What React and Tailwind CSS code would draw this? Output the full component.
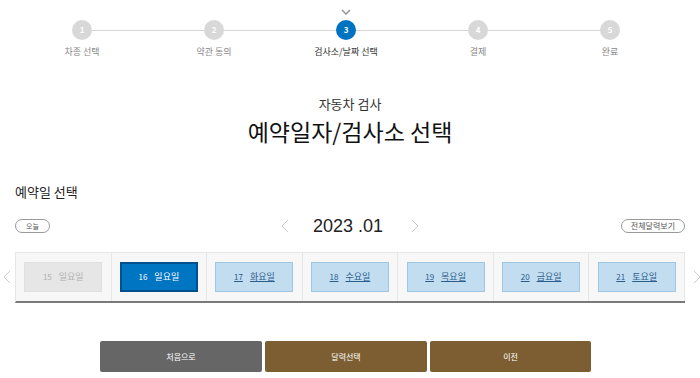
const steps = ['차종 선택', '약관 동의', '검사소/날짜 선택', '결제', '완료'];
const days = [
  { d: '15', w: '일요일', state: 'off' },
  { d: '16', w: '일요일', state: 'on' },
  { d: '17', w: '화요일' },
  { d: '18', w: '수요일' },
  { d: '19', w: '목요일' },
  { d: '20', w: '금요일' },
  { d: '21', w: '토요일' },
];

function Chevron({ dir, className }) {
  return (
    <svg width="8" height="14" viewBox="0 0 8 14" className={className}>
      <path d={dir === 'left' ? 'M7 1 1 7l6 6' : 'M1 1l6 6-6 6'} fill="none" stroke="currentColor" strokeWidth="1" />
    </svg>
  );
}

export default function App() {
  return (
    <div className="w-[700px] h-[378px] bg-white overflow-hidden text-[#222]"
      style={{ fontFamily: '"Noto Sans CJK KR", "Noto Sans", sans-serif' }}>

      {/* stepper */}
      <div className="relative mx-[16px] w-[660px] pt-[20px] h-[64px]">
        <div className="absolute left-[66px] right-[66px] top-[30px] h-px bg-[#d6d6d6]" />
        <div className="relative grid grid-cols-5">
          {steps.map(function (s, i) {
            var active = i === 2;
            return (
              <div key={s} className="relative flex flex-col items-center">
                {active && (
                  <svg width="10" height="6" viewBox="0 0 10 6" className="absolute -top-[11px]">
                    <path d="M1 1l4 4 4-4" fill="none" stroke="#999" strokeWidth="1.6" />
                  </svg>
                )}
                <div className={'w-[20px] h-[20px] rounded-full flex items-center justify-center text-[8px] font-bold text-white ' + (active ? 'bg-[#0073c0]' : 'bg-[#d8d8d8]')}>
                  {i + 1}
                </div>
                <div className={'mt-[6px] text-[9px] leading-[12px] ' + (active ? 'text-[#333]' : 'text-[#888]')}>{s}</div>
              </div>
            );
          })}
        </div>
      </div>

      {/* title */}
      <div className="flex flex-col items-center mt-[31px]">
        <div className="text-[13px] leading-[18px] text-[#333]">자동차 검사</div>
        <div className="text-[23px] leading-[32px] mt-[2px] text-[#111]">예약일자/검사소 선택</div>
      </div>

      <div className="px-[15px] mt-[35px]">
        <div className="text-[13px] leading-[20px] text-[#222]">예약일 선택</div>

        <div className="relative flex items-center justify-between mt-[15px] h-[18px]">
          <span className="border border-[#999] rounded-full text-[7px] leading-[12px] px-[10px] text-[#555]">오늘</span>
          <div className="absolute left-1/2 -translate-x-1/2 flex items-center text-[#ccc]">
            <Chevron dir="left" className="mr-[24px]" />
            <span className="text-[18px] leading-[22px] text-[#222]" style={{ fontFamily: '"Liberation Sans", "Noto Sans CJK KR", sans-serif' }}>2023 .01</span>
            <Chevron dir="right" className="ml-[28px]" />
          </div>
          <span className="border border-[#999] rounded-full text-[8px] leading-[12px] px-[9px] text-[#555]">전체달력보기</span>
        </div>
      </div>

      {/* calendar strip */}
      <div className="relative mt-[17px] mx-[15px]">
        <Chevron dir="left" className="absolute -left-[12px] top-[18px] text-[#ccc]" />
        <div className="grid grid-cols-7 bg-[#f7f7f7] border-t border-l border-[#e6e6e6] border-b-2 border-b-[#7a7a7a] h-[51px]">
          {days.map(function (day) {
            var cls = 'border border-[#9fc6e2] bg-[#c2ddef] text-[#2a5c8c] underline';
            if (day.state === 'off') cls = 'border border-[#e0e0e0] bg-[#e6e6e6] text-[#b0b0b0]';
            if (day.state === 'on') cls = 'border-2 border-[#00518d] bg-[#0075c1] text-white';
            return (
              <div key={day.d} className="border-r border-[#e6e6e6] flex items-center justify-center">
                <div className={'w-[78px] h-[30px] flex items-center justify-center gap-[7px] text-[8px] ' + cls}>
                  <span>{day.d}</span>
                  <span className="text-[9px]">{day.w}</span>
                </div>
              </div>
            );
          })}
        </div>
        <Chevron dir="right" className="absolute -right-[16px] top-[18px] text-[#ccc]" />
      </div>

      {/* buttons */}
      <div className="flex gap-[3px] mt-[38px] pl-[100px]">
        <button className="w-[162px] h-[31px] rounded-[2px] bg-[#666] text-white text-[8px]">처음으로</button>
        <button className="w-[162px] h-[31px] rounded-[2px] bg-[#7d5e33] text-white text-[8px]">달력선택</button>
        <button className="w-[161px] h-[31px] rounded-[2px] bg-[#7d5e33] text-white text-[8px]">이전</button>
      </div>
    </div>
  );
}
